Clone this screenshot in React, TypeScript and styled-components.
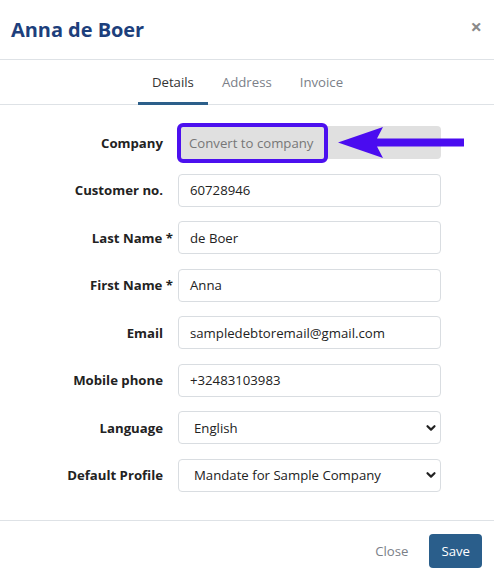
import React from "react";
import styled, { createGlobalStyle } from "styled-components";

const GlobalStyle = createGlobalStyle`
  html, body {
    margin: 0;
    padding: 0;
    background: #ffffff;
  }
  body {
    font-family: "Open Sans", "Noto Sans", Arial, sans-serif;
    font-size: 13.2px;
    color: #212529;
  }
  * { box-sizing: border-box; }
`;

// Styles

const Modal = styled.div`
  width: 494px;
  height: 581px;
  display: flex;
  flex-direction: column;
  background: #fff;
  position: relative;
`;

const Header = styled.div`
  height: 60px;
  display: flex;
  align-items: center;
  justify-content: space-between;
  padding: 0 12px 0 11px;
  border-bottom: 1px solid #dee2e6;
`;

const Title = styled.h4`
  margin: 0 0 1px;
  font-size: 20px;
  font-weight: 700;
  color: #1d3f7c;
  letter-spacing: -0.05px;
`;

const CloseX = styled.span`
  font-size: 20px;
  font-weight: 700;
  color: #8a8a8a;
  line-height: 1;
  margin-top: -6px;
`;

const Tabs = styled.div`
  display: flex;
  justify-content: center;
  height: 45px;
  border-bottom: 1px solid #dee2e6;
  padding-left: 1px;
`;

const Tab = styled.div<{ $active?: boolean }>`
  padding: 0 14px;
  display: flex;
  align-items: center;
  color: ${(p) => (p.$active ? "#333" : "#7b8088")};
  border-bottom: 3px solid ${(p) => (p.$active ? "#2c5f8a" : "transparent")};
  margin-bottom: -1px;
  padding-top: 1px;
`;

const Form = styled.div`
  display: flex;
  flex-direction: column;
  gap: 14.5px;
  padding: 21px 0 0;
  flex: 1;
`;

const Row = styled.div`
  display: grid;
  grid-template-columns: 163px 263px;
  column-gap: 15px;
  align-items: center;
  height: 33px;
`;

const Label = styled.label`
  text-align: right;
  font-weight: 700;
  color: #222;
  white-space: nowrap;
`;

const Required = styled.span`
  margin-right: -10px;
`;

const Input = styled.div`
  height: 33px;
  border: 1px solid #d9dde1;
  border-radius: 4px;
  padding: 0 11px;
  display: flex;
  align-items: center;
  color: #222;
`;

const Select = styled(Input)`
  padding: 0 2px 0 15px;
  justify-content: space-between;
`;

const Chevron = styled.svg`
  flex: none;
`;

const Readonly = styled.div`
  height: 33px;
  border-radius: 4px;
  background: #e0e0e0;
  display: flex;
  align-items: center;
  position: relative;
`;

const Highlight = styled.div`
  margin-left: -1px;
  height: 40px;
  width: 151px;
  border: 4px solid #4c10ef;
  border-radius: 6px;
  display: flex;
  align-items: center;
  padding-left: 8px;
  color: #777;
`;

const Arrow = styled.svg`
  position: absolute;
  left: 158px;
  top: 0;
`;

const Footer = styled.div`
  height: 61px;
  border-top: 1px solid #dee2e6;
  display: flex;
  align-items: center;
  justify-content: flex-end;
  padding: 0 12px 0 0;
  gap: 9px;
`;

const TextButton = styled.button`
  border: none;
  background: none;
  font: inherit;
  color: #7b8088;
  padding: 6px 12px;
`;

const PrimaryButton = styled.button`
  border: none;
  font: inherit;
  color: #fff;
  background: #2a5e8b;
  border-radius: 4px;
  height: 34px;
  padding: 0 12px;
`;

// Data

const fields = [
  { label: "Customer no.", value: "60728946" },
  { label: "Last Name", value: "de Boer", required: true },
  { label: "First Name", value: "Anna", required: true },
  { label: "Email", value: "sampledebtoremail@gmail.com" },
  { label: "Mobile phone", value: "+32483103983" },
];

const selects = [
  { label: "Language", value: "English" },
  { label: "Default Profile", value: "Mandate for Sample Company" },
];

// Component

const App: React.FC = () => {
  return (
    <Modal>
      <GlobalStyle />
      <Header>
        <Title>Anna de Boer</Title>
        <CloseX>×</CloseX>
      </Header>
      <Tabs>
        <Tab $active>Details</Tab>
        <Tab>Address</Tab>
        <Tab>Invoice</Tab>
      </Tabs>
      <Form>
        <Row>
          <Label>Company</Label>
          <Readonly>
            <Highlight>Convert to company</Highlight>
            <Arrow width="130" height="33" viewBox="0 0 130 33">
              <polygon
                points="2,16.5 47,1 41,12.5 128,12.5 128,20.5 41,20.5 47,32"
                fill="#4a0cf0"
              />
            </Arrow>
          </Readonly>
        </Row>
        {fields.map((f) => (
          <Row key={f.label}>
            <Label>
              {f.label}
              {f.required && <Required> *</Required>}
            </Label>
            <Input>{f.value}</Input>
          </Row>
        ))}
        {selects.map((s) => (
          <Row key={s.label}>
            <Label>{s.label}</Label>
            <Select>
              {s.value}
              <Chevron width="16" height="16" viewBox="0 0 16 16">
                <polyline
                  points="5.5,6.2 9,9.6 12.5,6.2"
                  fill="none"
                  stroke="#222"
                  strokeWidth="2.2"
                  strokeLinecap="round"
                  strokeLinejoin="round"
                />
              </Chevron>
            </Select>
          </Row>
        ))}
      </Form>
      <Footer>
        <TextButton>Close</TextButton>
        <PrimaryButton>Save</PrimaryButton>
      </Footer>
    </Modal>
  );
};

export default App;
